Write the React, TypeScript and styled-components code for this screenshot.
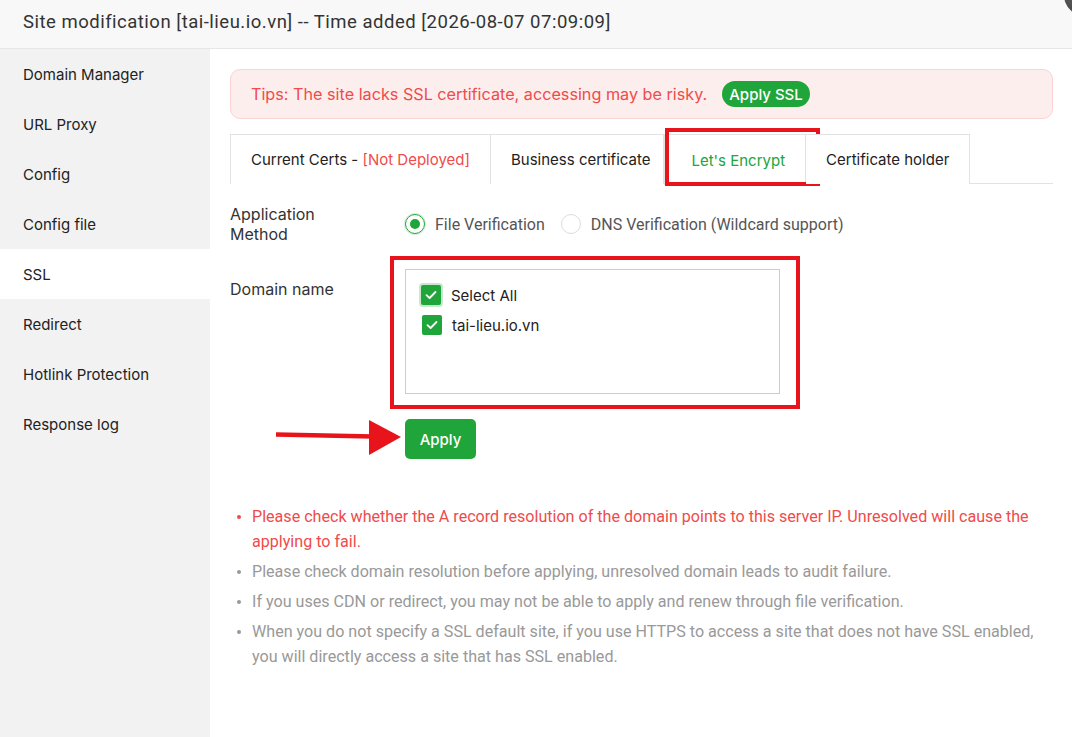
import React from "react";
import styled, { createGlobalStyle } from "styled-components";

const GREEN = "#20a53a";
const RED_NOTE = "#e8141c";

const GlobalStyle = createGlobalStyle`
  html, body { margin: 0; padding: 0; background: #ffffff; }
  body { font-family: Inter, "Noto Sans", sans-serif; color: #333; }
  * { box-sizing: border-box; }
`;

const Page = styled.div`
  width: 1072px;
  height: 737px;
  display: flex;
  flex-direction: column;
  overflow: hidden;
  position: relative;
`;

const Header = styled.header`
  height: 49px;
  flex: none;
  display: flex;
  align-items: center;
  padding: 0 0 5px 23px;
  background: #f7f8f7;
  border-bottom: 1px solid #e6e6e6;
  font-family: Roboto, "Noto Sans", sans-serif;
  font-size: 18.5px;
  letter-spacing: 0.5px;
  color: #333;
`;

const CloseKnob = styled.div`
  position: absolute;
  left: 1064px;
  top: -26px;
  width: 42px;
  height: 42px;
  border-radius: 50%;
  background: radial-gradient(circle at 40% 40%, #666, #3a3a3a);
`;

const Body = styled.div`
  flex: 1;
  display: flex;
  min-height: 0;
`;

const Sidebar = styled.nav`
  width: 210px;
  flex: none;
  background: #f2f2f2;
  display: flex;
  flex-direction: column;
`;

const NavItem = styled.div<{ $active?: boolean }>`
  height: 50px;
  display: flex;
  align-items: center;
  padding-left: 23px;
  font-size: 15px;
  color: #222;
  background: ${(p) => (p.$active ? "#ffffff" : "transparent")};
`;

const Main = styled.main`
  flex: 1;
  padding: 20px 19px 0 20px;
  display: flex;
  flex-direction: column;
`;

const Alert = styled.div`
  height: 50px;
  display: flex;
  align-items: center;
  gap: 15px;
  padding: 0 20px;
  background: #fdeeee;
  border: 1px solid #fbd3d3;
  border-radius: 10px;
  color: #ef4b4b;
  font-size: 16.2px;
`;

const PillButton = styled.button`
  height: 26px;
  padding: 0 7px;
  border: none;
  border-radius: 13px;
  background: ${GREEN};
  color: #fff;
  font-family: Inter, sans-serif;
  font-size: 15px;
  font-weight: 500;
`;

const Tabs = styled.div`
  margin-top: 15px;
  height: 50px;
  display: flex;
  border-bottom: 1px solid #e2e2e2;
`;

const Tab = styled.div<{ $active?: boolean; $padL?: number; $padR?: number }>`
  position: relative;
  display: flex;
  align-items: center;
  padding: 0 ${(p) => p.$padR ?? 20}px 0 ${(p) => p.$padL ?? 20}px;
  border: 1px solid #e2e2e2;
  border-left-width: ${(p) => (p.$active ? "1px" : "0")};
  border-bottom: none;
  margin-bottom: ${(p) => (p.$active ? "-1px" : "0")};
  height: ${(p) => (p.$active ? "51px" : "50px")};
  background: #fff;
  font-size: 15px;
  color: ${(p) => (p.$active ? GREEN : "#222")};
  white-space: nowrap;
  &:first-child { border-left-width: 1px; }
`;

const Muted = styled.span`
  color: #ef4b4b;
`;

const NoteFrame = styled.div<{ $t: number; $r: number; $b: number; $l: number }>`
  position: absolute;
  top: ${(p) => p.$t}px;
  right: ${(p) => p.$r}px;
  bottom: ${(p) => p.$b}px;
  left: ${(p) => p.$l}px;
  border: 4px solid ${RED_NOTE};
  pointer-events: none;
`;

const FormRow = styled.div<{ $top: number }>`
  display: flex;
  margin-top: ${(p) => p.$top}px;
`;

const Label = styled.div<{ $pad?: number }>`
  width: 175px;
  flex: none;
  padding-right: 60px;
  padding-top: ${(p) => p.$pad ?? 0}px;
  font-size: 16px;
  line-height: 20px;
  color: #333;
`;

const RadioGroup = styled.div`
  display: flex;
  align-items: center;
  gap: 16px;
  font-family: Roboto, sans-serif;
  font-size: 16px;
  color: #555;
`;

const RadioOption = styled.label`
  display: flex;
  align-items: center;
  gap: 10px;
`;

const RadioDot = styled.span<{ $on?: boolean }>`
  width: 20px;
  height: 20px;
  border-radius: 50%;
  border: 1px solid ${(p) => (p.$on ? GREEN : "#dcdcdc")};
  box-shadow: ${(p) => (p.$on ? "0 0 0 1px rgba(32,165,58,0.18)" : "none")};
  display: flex;
  align-items: center;
  justify-content: center;
  &::after {
    content: "";
    width: 10px;
    height: 10px;
    border-radius: 50%;
    background: ${(p) => (p.$on ? GREEN : "transparent")};
  }
`;

const BoxWrap = styled.div`
  position: relative;
`;

const DomainBox = styled.div`
  width: 375px;
  height: 125px;
  border: 1px solid #cccccc;
  padding: 10px 0 0 15px;
  display: flex;
  flex-direction: column;
`;

const CheckRow = styled.label`
  height: 30px;
  display: flex;
  align-items: center;
  gap: 10px;
  font-size: 15px;
  color: #222;
`;

const CheckSquare = styled.span<{ $focus?: boolean }>`
  width: 20px;
  height: 20px;
  margin-left: ${(p) => (p.$focus ? "0" : "1px")};
  border-radius: 2px;
  background: ${GREEN};
  box-shadow: ${(p) => (p.$focus ? "0 0 0 2px rgba(32,165,58,0.25)" : "none")};
  display: flex;
  align-items: center;
  justify-content: center;
`;

const ApplyRow = styled.div`
  position: relative;
  margin: 25px 0 0 175px;
`;

const ApplyButton = styled.button`
  width: 71px;
  height: 40px;
  border: none;
  border-radius: 5px;
  background: ${GREEN};
  color: #fff;
  font-family: Inter, sans-serif;
  font-size: 15px;
  font-weight: 500;
`;

const Pointer = styled.svg`
  position: absolute;
  left: -130px;
  top: 0;
`;

const Notes = styled.ul`
  list-style: none;
  margin: 45px 0 0 0;
  padding: 0 0 0 22px;
  font-family: Roboto, sans-serif;
  font-size: 16.1px;
  line-height: 25px;
`;

const Note = styled.li<{ $warn?: boolean }>`
  position: relative;
  margin-bottom: 5px;
  color: ${(p) => (p.$warn ? "#ef4b4b" : "#999999")};
  &::before {
    content: "";
    position: absolute;
    left: -15px;
    top: 11px;
    width: 4px;
    height: 4px;
    border-radius: 50%;
    background: currentColor;
  }
`;

const Tick = () => (
  <svg width="14" height="14" viewBox="0 0 14 14">
    <polyline points="2.5,7.2 5.6,10 11.5,4" fill="none" stroke="#fff" strokeWidth="1.8" strokeLinecap="round" strokeLinejoin="round" />
  </svg>
);

const navItems = [
  "Domain Manager",
  "URL Proxy",
  "Config",
  "Config file",
  "SSL",
  "Redirect",
  "Hotlink Protection",
  "Response log",
];

const notes = [
  { warn: true, text: "Please check whether the A record resolution of the domain points to this server IP. Unresolved will cause the applying to fail." },
  { text: "Please check domain resolution before applying, unresolved domain leads to audit failure." },
  { text: "If you uses CDN or redirect, you may not be able to apply and renew through file verification." },
  { text: "When you do not specify a SSL default site, if you use HTTPS to access a site that does not have SSL enabled, you will directly access a site that has SSL enabled." },
];

export default function App() {
  return (
    <>
      <GlobalStyle />
      <Page>
        <Header>Site modification [tai-lieu.io.vn] -- Time added [2026-08-07 07:09:09]</Header>
        <CloseKnob />
        <Body>
          <Sidebar>
            {navItems.map((n) => (
              <NavItem key={n} $active={n === "SSL"}>
                {n}
              </NavItem>
            ))}
          </Sidebar>
          <Main>
            <Alert>
              <span>Tips: The site lacks SSL certificate, accessing may be risky.</span>
              <PillButton>Apply SSL</PillButton>
            </Alert>

            <Tabs>
              <Tab>
                Current Certs -&nbsp;<Muted>[Not Deployed]</Muted>
              </Tab>
              <Tab $padR={13}>Business certificate</Tab>
              <Tab $active $padL={26}>
                Let's Encrypt
                <NoteFrame $t={-7} $r={-15} $b={-1} $l={0} />
              </Tab>
              <Tab>Certificate holder</Tab>
            </Tabs>

            <FormRow $top={20}>
              <Label>Application Method</Label>
              <RadioGroup>
                <RadioOption>
                  <RadioDot $on />
                  File Verification
                </RadioOption>
                <RadioOption>
                  <RadioDot />
                  DNS Verification (Wildcard support)
                </RadioOption>
              </RadioGroup>
            </FormRow>

            <FormRow $top={25}>
              <Label $pad={10}>Domain name</Label>
              <BoxWrap>
                <DomainBox>
                  <CheckRow>
                    <CheckSquare $focus>
                      <Tick />
                    </CheckSquare>
                    Select All
                  </CheckRow>
                  <CheckRow>
                    <CheckSquare>
                      <Tick />
                    </CheckSquare>
                    tai-lieu.io.vn
                  </CheckRow>
                </DomainBox>
                <NoteFrame $t={-13} $r={-20} $b={-15} $l={-15} />
              </BoxWrap>
            </FormRow>

            <ApplyRow>
              <Pointer width="130" height="40" viewBox="0 0 130 40">
                <line x1="1" y1="15.5" x2="98" y2="17.5" stroke={RED_NOTE} strokeWidth="4.5" />
                <polygon points="94,1 126,18 94,36" fill={RED_NOTE} />
              </Pointer>
              <ApplyButton>Apply</ApplyButton>
            </ApplyRow>

            <Notes>
              {notes.map((n, i) => (
                <Note key={i} $warn={n.warn}>
                  {n.text}
                </Note>
              ))}
            </Notes>
          </Main>
        </Body>
      </Page>
    </>
  );
}
